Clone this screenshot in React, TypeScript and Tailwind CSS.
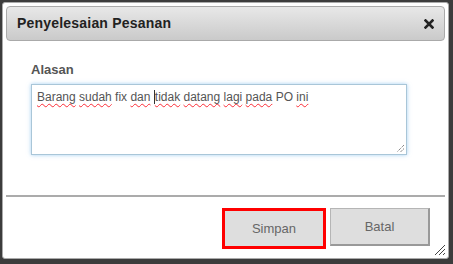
export default function App() {
  return (
    <div className="w-[453px] h-[264px] bg-[#3c3c3c] pt-[2px] pl-[2px] overflow-hidden" style={{ fontFamily: '"Liberation Sans", Arial, sans-serif' }}>
      <div className="relative w-[447px] h-[257px] bg-white rounded-[3px] border border-[#aaa] p-[3px]">
        {/* Title bar */}
        <div className="h-[35px] rounded-[4px] border border-[#aaa] bg-gradient-to-b from-[#e8e8e8] to-[#cacaca] flex items-center justify-between pl-[10px] pr-[10px]">
          <span className="text-[14px] font-bold text-[#222] tracking-[0.2px]">Penyelesaian Pesanan</span>
          <svg width="10" height="10" viewBox="0 0 10 10">
            <path d="M1.5 1.5 L8.5 8.5 M8.5 1.5 L1.5 8.5" stroke="#222" strokeWidth="2.6" strokeLinecap="square" />
          </svg>
        </div>

        {/* Body */}
        <div className="h-[154px] pl-[25px] pt-[22px]">
          <div className="text-[13px] font-bold text-[#555] leading-[14px]">Alasan</div>
          <div className="relative mt-[7px] w-[376px] h-[71px] border border-[#a9c6d8] shadow-[0_0_4px_rgba(102,175,233,0.6)] px-[5px] pt-[5px] text-[12px] text-[#555] leading-[15px]">
            <span className="underline decoration-wavy decoration-red-500 decoration-1 underline-offset-2">Barang</span>{" "}
            <span className="underline decoration-wavy decoration-red-500 decoration-1 underline-offset-2">sudah</span> fix{" "}
            <span className="underline decoration-wavy decoration-red-500 decoration-1 underline-offset-2">dan</span>{" "}
            <span className="border-l border-[#333]"></span>
            <span className="underline decoration-wavy decoration-red-500 decoration-1 underline-offset-2">tidak</span>{" "}
            <span className="underline decoration-wavy decoration-red-500 decoration-1 underline-offset-2">datang</span>{" "}
            <span className="underline decoration-wavy decoration-red-500 decoration-1 underline-offset-2">lagi</span>{" "}
            <span className="underline decoration-wavy decoration-red-500 decoration-1 underline-offset-2">pada</span> PO{" "}
            <span className="underline decoration-wavy decoration-red-500 decoration-1 underline-offset-2">ini</span>
            <svg className="absolute right-[1px] bottom-[1px]" width="9" height="9" viewBox="0 0 9 9">
              <path d="M8 1 L1 8 M8 4.5 L4.5 8" stroke="#555" strokeWidth="1" strokeDasharray="1 1" />
            </svg>
          </div>
        </div>

        {/* Footer */}
        <div className="border-t-2 border-[#ababab] flex justify-end gap-[4px] pt-[11px] pr-[15px]">
          <button className="w-[104px] h-[41px] border-[3px] border-[#ff0000] bg-[#dedede] text-[13px] text-[#666]">Simpan</button>
          <button className="w-[100px] h-[38px] border border-[#b5b5b5] border-b-2 border-r-2 border-b-[#999] border-r-[#999] bg-[#dedede] text-[13px] text-[#666]">Batal</button>
        </div>

        <svg className="absolute right-[2px] bottom-[2px]" width="12" height="12" viewBox="0 0 12 12">
          <path d="M11 1 L1 11 M11 5 L5 11 M11 9 L9 11" stroke="#444" strokeWidth="1" />
        </svg>
      </div>
    </div>
  );
}
